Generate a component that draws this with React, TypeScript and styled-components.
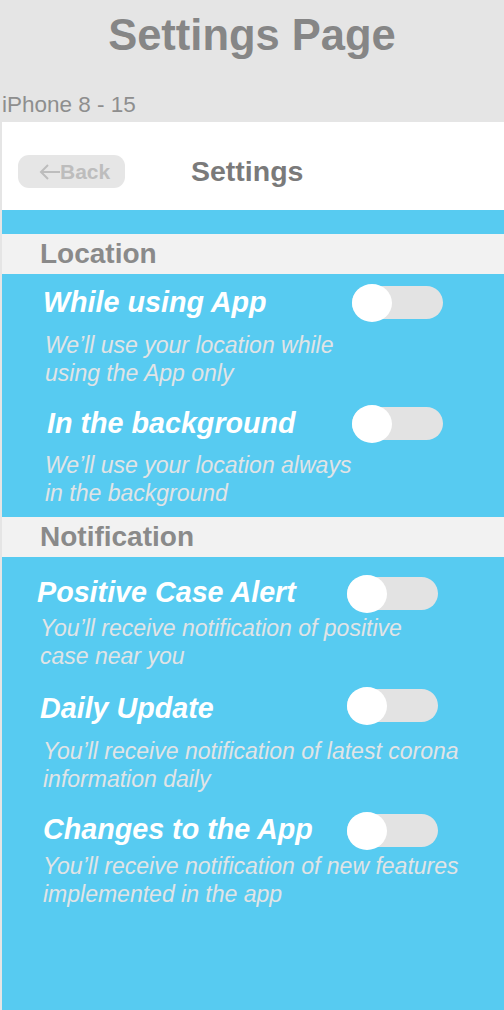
import React from "react";
import styled, { createGlobalStyle } from "styled-components";

const Global = createGlobalStyle`
  html, body { margin: 0; padding: 0; background: #e5e5e5; }
  body { font-family: "Liberation Sans", Arial, sans-serif; }
`;

const Page = styled.div`
  min-height: 1010px;
  display: flex;
  flex-direction: column;
  background: #e5e5e5;
`;

const PageTitle = styled.h1`
  margin: 10px 0 0;
  height: 50px;
  line-height: 50px;
  text-align: center;
  font-size: 43.5px;
  font-weight: 700;
  color: #868686;
`;

const FrameLabel = styled.div`
  margin: 33px 0 5px 2px;
  height: 24px;
  line-height: 24px;
  font-size: 22.5px;
  color: #8e8e8e;
`;

const Frame = styled.div`
  margin-left: 2px;
  flex: 1;
  display: flex;
  flex-direction: column;
  background: #57cbf1;
`;

const Header = styled.header`
  height: 88px;
  box-sizing: border-box;
  padding: 33px 0 0 16px;
  background: #ffffff;
  display: flex;
  align-items: flex-start;
`;

const BackButton = styled.button`
  width: 107px;
  height: 33px;
  border: none;
  border-radius: 11px;
  background: #e6e6e6;
  color: #bdbdbd;
  font-family: "Liberation Sans", Arial, sans-serif;
  font-size: 21px;
  font-weight: 700;
  display: flex;
  align-items: center;
  justify-content: flex-start;
  padding: 0 0 0 20px;
`;

const HeaderTitle = styled.div`
  margin-left: 66px;
  height: 33px;
  line-height: 33px;
  font-size: 28.5px;
  font-weight: 700;
  color: #7a7a7a;
`;

const Body = styled.div`
  padding-top: 24px;
  display: flex;
  flex-direction: column;
`;

const SectionBand = styled.div<{ $gap: number }>`
  margin-top: ${(p) => p.$gap}px;
  height: 40px;
  line-height: 40px;
  background: #f2f2f2;
  padding-left: 38px;
  font-size: 28px;
  font-weight: 700;
  color: #8a8a8a;
`;

const Item = styled.div<{ $gap: number }>`
  margin-top: ${(p) => p.$gap}px;
  display: flex;
  flex-direction: column;
`;

const Row = styled.div<{ $toggleX: number }>`
  height: 40px;
  display: grid;
  grid-template-columns: ${(p) => p.$toggleX}px 91px;
  align-items: center;
`;

const ItemTitle = styled.div<{ $x: number; $dy: number }>`
  padding-left: ${(p) => p.$x}px;
  transform: translateY(${(p) => p.$dy}px);
  font-size: 28.7px;
  font-weight: 700;
  font-style: italic;
  color: #ffffff;
  white-space: nowrap;
`;

const Track = styled.div`
  position: relative;
  width: 91px;
  height: 33px;
  border-radius: 17px;
  background: #e3e3e3;
`;

const Knob = styled.div`
  position: absolute;
  left: 0;
  top: -2px;
  width: 40px;
  height: 38px;
  border-radius: 50%;
  background: #ffffff;
`;

const Desc = styled.div<{ $x: number; $gap: number }>`
  margin-top: ${(p) => p.$gap}px;
  padding-left: ${(p) => p.$x}px;
  font-size: 23px;
  line-height: 28px;
  font-style: italic;
  color: #e1e4e6;
  white-space: nowrap;
`;

type Setting = {
  title: string;
  lines: string[];
  titleX: number;
  descX: number;
  toggleX: number;
  gap: number;
  descGap: number;
  dy: number;
};

const Toggle = () => (
  <Track>
    <Knob />
  </Track>
);

const SettingItem = ({ s }: { s: Setting }) => (
  <Item $gap={s.gap}>
    <Row $toggleX={s.toggleX}>
      <ItemTitle $x={s.titleX} $dy={s.dy}>{s.title}</ItemTitle>
      <Toggle />
    </Row>
    <Desc $x={s.descX} $gap={s.descGap}>
      {s.lines[0]}
      <br />
      {s.lines[1]}
    </Desc>
  </Item>
);

const location: Setting[] = [
  { title: "While using App", lines: ["We’ll use your location while", "using the App only"], titleX: 41, descX: 43, toggleX: 350, gap: 8, descGap: 9, dy: 0 },
  { title: "In the background", lines: ["We’ll use your location always", "in the background"], titleX: 45, descX: 43, toggleX: 350, gap: 16, descGap: 8, dy: 0 },
];

const notification: Setting[] = [
  { title: "Positive Case Alert", lines: ["You’ll receive notification of positive", "case near you"], titleX: 35, descX: 38, toggleX: 345, gap: 16, descGap: 1, dy: -1 },
  { title: "Daily Update", lines: ["You’ll receive notification of latest corona", "information daily"], titleX: 38, descX: 41, toggleX: 345, gap: 15, descGap: 12, dy: 3 },
  { title: "Changes to the App", lines: ["You’ll receive notification of new features", "implemented in the app"], titleX: 41, descX: 41, toggleX: 345, gap: 17, descGap: 2, dy: -1 },
];

export default function App() {
  return (
    <>
      <Global />
      <Page>
        <PageTitle>Settings Page</PageTitle>
        <FrameLabel>iPhone 8 - 15</FrameLabel>
        <Frame>
          <Header>
            <BackButton>
              <svg width="22" height="18" viewBox="0 0 22 18" fill="none" stroke="#bdbdbd" strokeWidth="2">
                <path d="M22 9H3M10 2L3 9l7 7" />
              </svg>
              Back
            </BackButton>
            <HeaderTitle>Settings</HeaderTitle>
          </Header>
          <Body>
            <SectionBand $gap={0}>Location</SectionBand>
            {location.map((s) => (
              <SettingItem key={s.title} s={s} />
            ))}
            <SectionBand $gap={10}>Notification</SectionBand>
            {notification.map((s) => (
              <SettingItem key={s.title} s={s} />
            ))}
          </Body>
        </Frame>
      </Page>
    </>
  );
}
